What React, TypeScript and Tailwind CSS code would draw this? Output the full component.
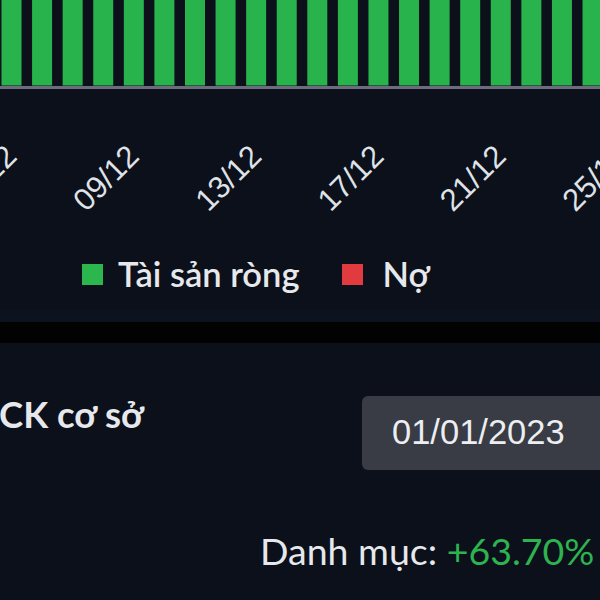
import React from "react";

const BAR_COUNT = 20;
const PERIOD = 30.58;
const labels = ["05/12", "09/12", "13/12", "17/12", "21/12", "25/12"];

function Chart() {
  return (
    <svg width="600" height="232" viewBox="0 0 600 232" className="block">
      {Array.from({ length: BAR_COUNT }).map((_, i) => (
        <rect key={i} x={1.5 + i * PERIOD} y={0} width={20} height={85.5} fill="#29b34c" />
      ))}
      <rect x={0} y={86} width={600} height={3} fill="#6c6c7e" />
      {labels.map((l, k) => {
        const x = 18.5 + k * 122.3;
        const y = 158;
        return (
          <text
            key={l}
            x={x}
            y={y}
            textAnchor="end"
            transform={`rotate(-45 ${x} ${y})`}
            fill="#dfe2e7"
            style={{ fontFamily: '"Liberation Sans", Arial, sans-serif', fontSize: 31 }}
          >
            {l}
          </text>
        );
      })}
    </svg>
  );
}

export default function App() {
  return (
    <div className="w-[600px] h-[600px] overflow-hidden bg-[#0b101a] text-[#e6e8ec] [font-family:Lato,'Noto_Sans',sans-serif]">
      <Chart />
      <div className="h-[78px] flex items-center pl-[82px] pt-[6px]">
        <span className="w-[21px] h-[21px] bg-[#2cb64e] mr-[15px]" />
        <span className="text-[34.5px] leading-none font-semibold mr-[42px]">Tài sản ròng</span>
        <span className="w-[21px] h-[21px] bg-[#e13b3f] mr-[20px]" />
        <span className="text-[34.5px] leading-none font-semibold">Nợ</span>
      </div>
      <div className="h-[12px] bg-[#0d131e]" />
      <div className="h-[21px] bg-[#020203]" />
      <div className="flex items-start justify-between pt-[53px]">
        <div className="-ml-[1px] text-[36.5px] leading-none font-bold whitespace-nowrap">CK cơ sở</div>
        <div className="w-[260px] shrink-0 -mr-[22px] h-[74px] rounded-[6px] bg-[#393c44] flex items-center pl-[30px] text-[34.5px] text-[#eceef2] [font-family:'Liberation_Sans',Arial,sans-serif]">
          01/01/2023
        </div>
      </div>
      <div className="pl-[260px] pt-[62px] whitespace-nowrap text-[37.5px] leading-none">
        Danh mục: <span className="text-[#2db34f]">+63.70%</span>
      </div>
    </div>
  );
}
